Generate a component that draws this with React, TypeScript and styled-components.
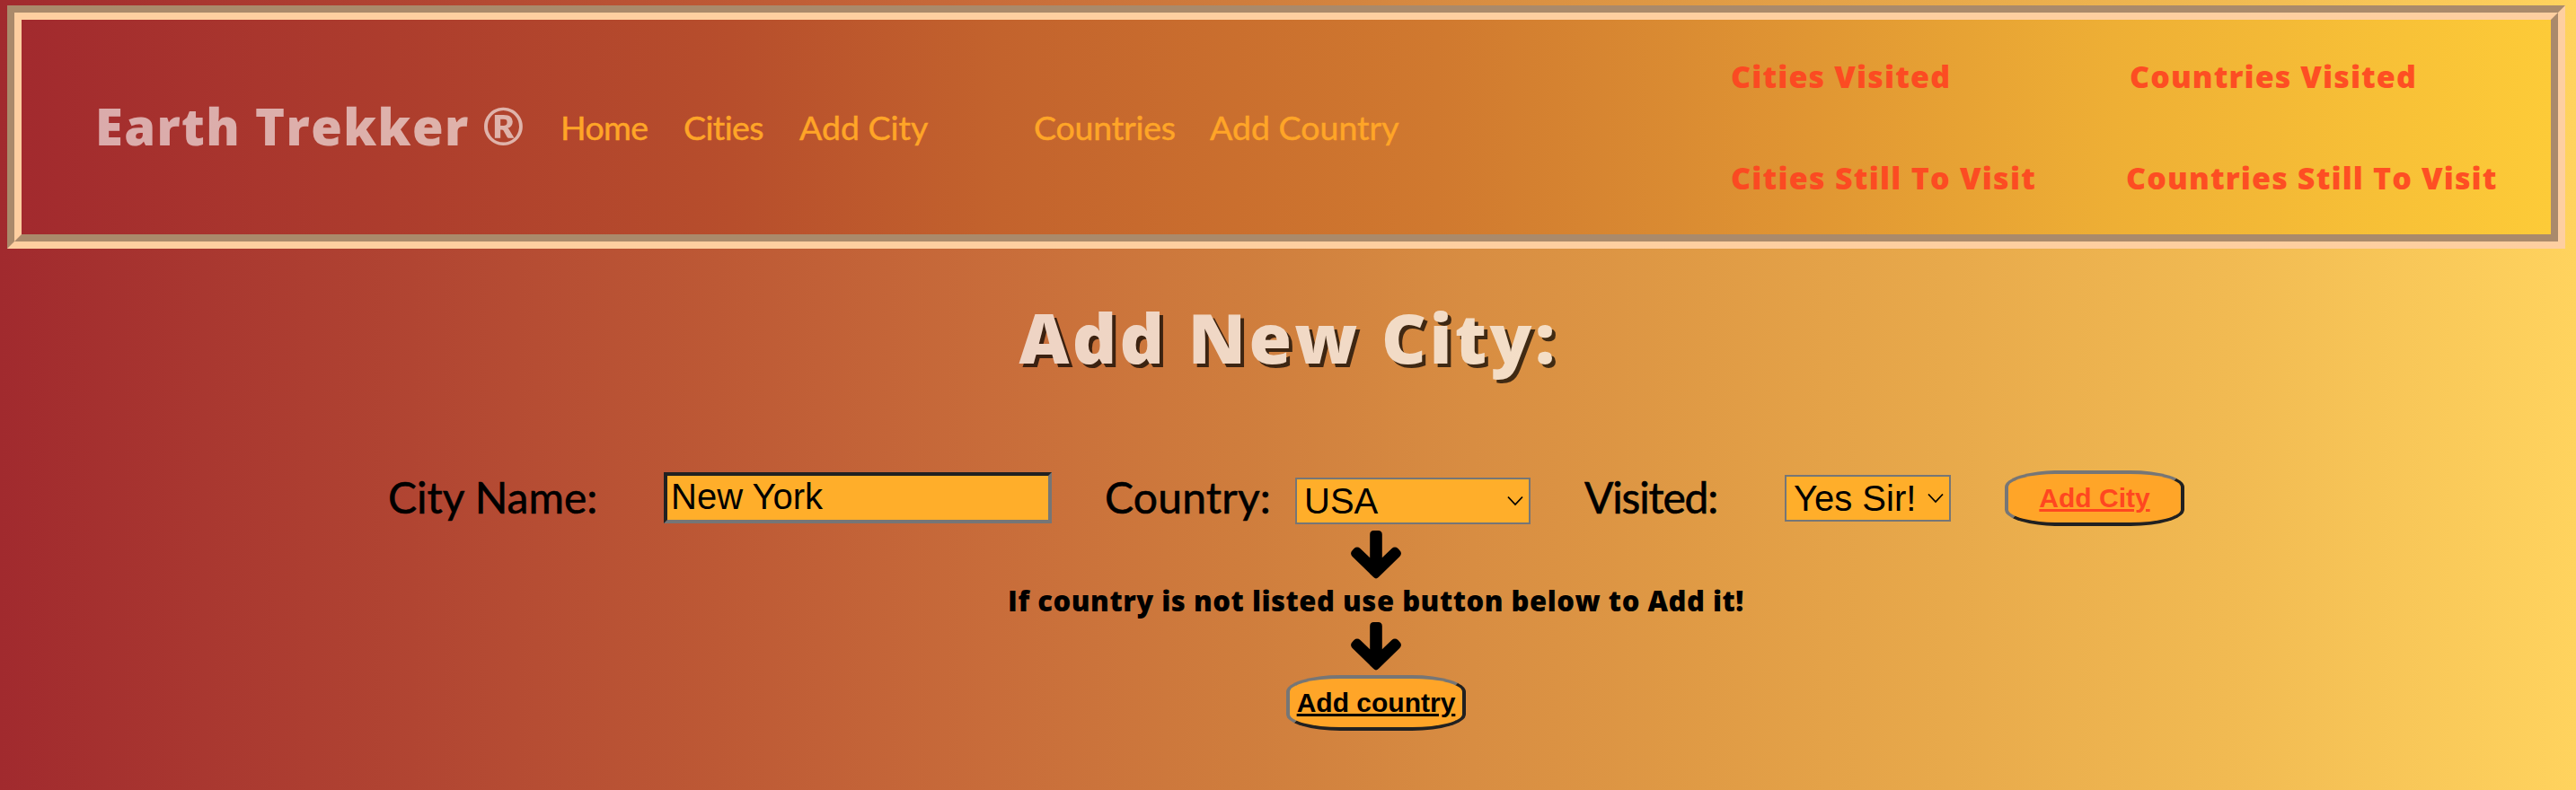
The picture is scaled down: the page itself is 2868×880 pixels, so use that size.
import React from "react";
import styled, { createGlobalStyle } from "styled-components";

const light = '"Gill Sans", Lato, sans-serif';
const heavy = '"Gill Sans Heavy", "Open Sans", sans-serif';
const control = '"Liberation Sans", Arial, sans-serif';

const GlobalStyle = createGlobalStyle`
  *, *::before, *::after { box-sizing: border-box; }
  body { margin: 0; }
`;

const Page = styled.div`
  width: 2868px;
  height: 880px;
  overflow: hidden;
  display: flow-root;
  background: linear-gradient(to right,
    #a12a2e 0px, #bd5935 800px, #c86c3a 1100px, #cf7d3d 1380px, #d88d42 1640px,
    #e09b45 1900px, #f1ba52 2480px, #ffd35e 2868px);
`;

const Header = styled.header`
  display: flex;
  align-items: center;
  height: 271px;
  margin: 6px 12px 0 8px;
  padding-left: 82px;
  border: 16px groove #fecfa0;
  background: linear-gradient(to right,
    #a22a2e 0px, #b74e2c 790px, #c3632d 1090px, #d0792f 1576px, #da8b32 1840px,
    #eeaf35 2330px, #fdcb38 2816px);
`;

const Brand = styled.div`
  width: 518px;
  margin-bottom: 3px;
  font: 800 56px/1 ${heavy};
  letter-spacing: 1.4px;
  color: #fff;
  opacity: 0.6;
  white-space: nowrap;
`;

const Mark = styled.span`
  margin-left: -2px;
  font-family: ${light};
  font-weight: 700;
  font-size: 58px;
  line-height: 0;
`;

const Nav = styled.nav`
  display: flex;
  align-items: center;
`;

const NavLink = styled.a<{ $width: number; $tracking?: number }>`
  width: ${(p) => p.$width}px;
  font: 400 37.5px/1 ${light};
  font-variant-ligatures: none;
  letter-spacing: ${(p) => p.$tracking ?? 0}px;
  color: #ffa527;
  -webkit-text-stroke: 0.5px #ffa527;
  white-space: nowrap;
`;

const Stats = styled.div`
  display: grid;
  grid-template-columns: 440px auto;
  row-gap: 79px;
  margin-left: 32px;
`;

const Stat = styled.div<{ $tracking: number; $indent?: number }>`
  padding-left: ${(p) => p.$indent ?? 0}px;
  font: 800 34px/1 ${heavy};
  letter-spacing: ${(p) => p.$tracking}px;
  color: #ff4321;
  opacity: 0.9;
  white-space: nowrap;
`;

const Title = styled.h1`
  margin: 60px 0 110px;
  padding-left: 1px;
  text-align: center;
  font: 800 77px/1 ${heavy};
  letter-spacing: 3.35px;
  color: #fff;
  text-shadow: 4px 4px 0 #000;
  opacity: 0.7;
`;

const FormRow = styled.form`
  display: flex;
  align-items: flex-start;
  height: 62px;
  padding-left: 432px;
`;

const Label = styled.label<{ $width: number; $tracking: number }>`
  width: ${(p) => p.$width}px;
  margin-top: 6px;
  font: 400 48px/1 ${light};
  font-variant-ligatures: none;
  letter-spacing: ${(p) => p.$tracking}px;
  color: #000;
  -webkit-text-stroke: 0.6px #000;
  white-space: nowrap;
`;

const TextInput = styled.input`
  width: 432px;
  height: 57px;
  margin: 2px 59px 0 0;
  padding: 0 4px 2px;
  border: 4px solid;
  border-color: #212121 #767676 #767676 #212121;
  background: #ffae2a;
  color: #000;
  font: 400 40px ${control};
  outline: none;
`;

const SelectBox = styled.div<{ $width: number; $top: number }>`
  position: relative;
  width: ${(p) => p.$width}px;
  height: 52px;
  margin: ${(p) => p.$top}px 60px 0 0;

  svg {
    position: absolute;
    right: 7px;
    top: 19px;
  }
`;

const Select = styled.select`
  appearance: none;
  width: 100%;
  height: 100%;
  padding: 0 8px;
  border: 2px solid #767676;
  border-radius: 0;
  background: #ffae2a;
  color: #000;
  font: 400 40px ${control};
`;

const Button = styled.button<{ $color: string }>`
  width: 200px;
  height: 62px;
  padding: 0;
  border: 4px solid;
  border-color: #767676 #212121 #212121 #767676;
  border-radius: 30%;
  background: #ffa528;
  color: ${(p) => p.$color};
  font: 700 30px ${control};
  text-decoration: underline;
  text-decoration-thickness: 3px;
  white-space: nowrap;
`;

const Help = styled.section`
  display: flex;
  flex-direction: column;
  align-items: center;
  padding: 5px 0 0 196px;
`;

const Note = styled.p`
  margin: 9px 0 8px;
  font: 800 31px/1 ${heavy};
  letter-spacing: 0.52px;
  color: #000;
  white-space: nowrap;
`;

const ArrowIcon = styled.svg`
  display: block;
  width: 56px;
  height: 54px;
  margin-bottom: 0;
`;

const Spacer = styled.div`
  height: 5px;
`;

const Chevron = () => (
  <svg width="20" height="14" viewBox="0 0 20 14" fill="none" stroke="#000" strokeWidth="1.8">
    <path d="M2 2.500 10 11 18 2.500" />
  </svg>
);

const DownArrow = () => (
  <ArrowIcon viewBox="0 0 56 54">
    <path d="M21.200 4.500Q21.200 0 25.500 0H30.300Q34.800 0 34.800 4.500V30.300L45.500 20Q49 17.200 52.500 20L54.500 22.300Q57.500 25.500 54.300 29L31.500 51.300Q28 55.500 24.500 51.300L1.700 29Q-1.500 25.500 1.500 22.300L3.500 20Q7 17.200 10.500 20L21.200 30.300Z" />
  </ArrowIcon>
);

export default function App() {
  return (
    <Page>
      <GlobalStyle />
      <Header>
        <Brand>
          Earth Trekker <Mark>®</Mark>
        </Brand>
        <Nav>
          <NavLink $width={137} $tracking={-0.6}>Home</NavLink>
          <NavLink $width={129} $tracking={-0.6}>Cities</NavLink>
          <NavLink $width={261}>Add City</NavLink>
          <NavLink $width={196} $tracking={-0.2}>Countries</NavLink>
          <NavLink $width={548}>Add Country</NavLink>
        </Nav>
        <Stats>
          <Stat $tracking={1.15}>Cities Visited</Stat>
          <Stat $tracking={1.1} $indent={4}>Countries Visited</Stat>
          <Stat $tracking={1.25}>Cities Still To Visit</Stat>
          <Stat $tracking={1.15}>Countries Still To Visit</Stat>
        </Stats>
      </Header>
      <Title>Add New City:</Title>
      <FormRow>
        <Label $width={307} $tracking={0}>City Name:</Label>
        <TextInput defaultValue="New York" />
        <Label $width={212} $tracking={0.2}>Country:</Label>
        <SelectBox $width={262} $top={8}>
          <Select defaultValue="USA">
            <option>USA</option>
          </Select>
          <Chevron />
        </SelectBox>
        <Label $width={223} $tracking={-1.2}>Visited:</Label>
        <SelectBox $width={185} $top={5}>
          <Select defaultValue="Yes Sir!">
            <option>Yes Sir!</option>
          </Select>
          <Chevron />
        </SelectBox>
        <Button type="button" $color="#ff4720">Add City</Button>
      </FormRow>
      <Help>
        <DownArrow />
        <Note>If country is not listed use button below to Add it!</Note>
        <DownArrow />
        <Spacer />
        <Button type="button" $color="#000">Add country</Button>
      </Help>
    </Page>
  );
}
